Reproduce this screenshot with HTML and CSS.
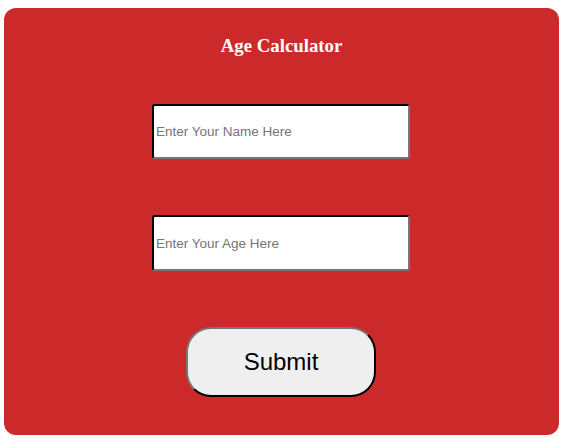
FILE: index.html
```html
<!DOCTYPE html>
<html lang="en">
<head>
    <meta charset="UTF-8">
    <meta name="viewport" content="width=device-width, initial-scale=1.0">
    <title>Age Calculator</title>
    <link rel="stylesheet" href="styles.css">
</head>
<body>

    <div class="card">
        <h1 class="title">Age Calculator</h1>

        <form class="age-form">
            <input class="field" type="text" placeholder="Enter Your Name Here">
            <input class="field" type="text" placeholder="Enter Your Age Here">
            <button class="submit-button" type="button">Submit</button>
        </form>
    </div>

</body>
</html>
```

FILE: styles.css
```css
* {
    box-sizing: border-box;
}

body {
    margin: 8px 7px 0 4px;
    background-color: white;
}

.card {
    background-color: #cc2a2a;
    border-radius: 12px;
    height: 427px;
    padding-top: 28px;
    display: flex;
    flex-direction: column;
    align-items: center;
}

.title {
    margin: 0;
    color: white;
    font-family: "Liberation Serif", "Times New Roman", serif;
    font-size: 18.8px;
    font-weight: bold;
    line-height: 20px;
}

.age-form {
    display: flex;
    flex-direction: column;
    align-items: center;
    margin-top: 48px;
    margin-right: 1px;
    gap: 56px;
}

.field {
    width: 258px;
    height: 55px;
    padding: 1px 2px;
    border: 2px inset #767676;
    border-top-color: #1f1f1f;
    border-left-color: #1f1f1f;
    border-radius: 3px;
    background-color: white;
    font-family: "Liberation Sans", Arial, sans-serif;
    font-size: 13.5px;
}

.field + .field {
    height: 56px;
}

.field::placeholder {
    color: #757575;
}

.submit-button {
    width: 190px;
    height: 70px;
    border: 2px outset #767676;
    border-bottom-color: #2a2a2a;
    border-right-color: #2a2a2a;
    border-radius: 25px;
    background-color: #efefef;
    color: black;
    font-family: "Liberation Sans", Arial, sans-serif;
    font-size: 24px;
    cursor: pointer;
}
```
